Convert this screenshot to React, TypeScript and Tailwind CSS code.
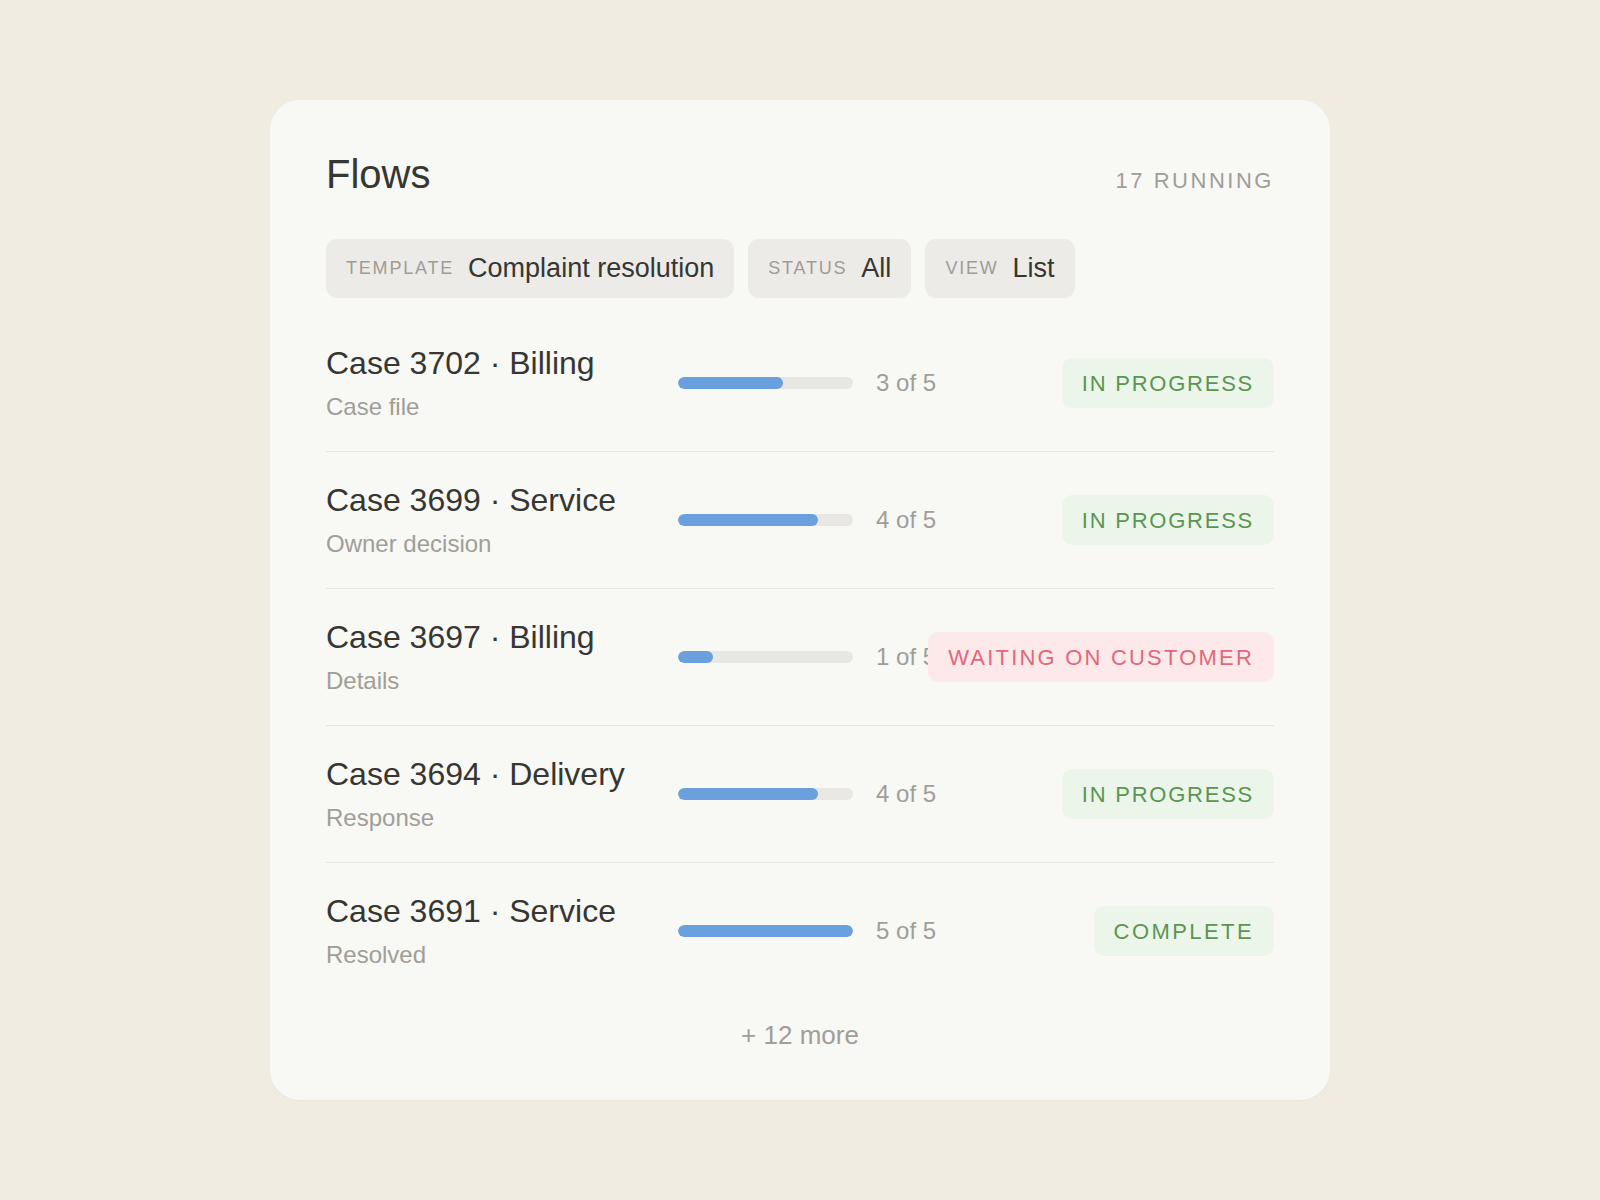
import React from 'react';

type Status = 'progress' | 'waiting' | 'complete';

const flows: { id: number; kind: string; step: string; done: number; status: Status }[] = [
  { id: 3702, kind: 'Billing', step: 'Case file', done: 3, status: 'progress' },
  { id: 3699, kind: 'Service', step: 'Owner decision', done: 4, status: 'progress' },
  { id: 3697, kind: 'Billing', step: 'Details', done: 1, status: 'waiting' },
  { id: 3694, kind: 'Delivery', step: 'Response', done: 4, status: 'progress' },
  { id: 3691, kind: 'Service', step: 'Resolved', done: 5, status: 'complete' },
];

const statusStyle: Record<Status, { label: string; className: string }> = {
  progress: { label: 'IN PROGRESS', className: 'bg-[#ecf5e9] text-[#5a9652] tracking-[0.08em]' },
  waiting: { label: 'WAITING ON CUSTOMER', className: 'bg-[#fde9e9] text-[#e0687c] tracking-[0.1em]' },
  complete: { label: 'COMPLETE', className: 'bg-[#ecf5e9] text-[#5a9652] tracking-[0.11em]' },
};

function Chip({ label, value }: { label: string; value: string }) {
  return (
    <div className="h-[59px] px-5 flex items-center gap-3.5 rounded-[11px] bg-[#ecebe7]">
      <span className="text-[18px] tracking-[0.1em] text-[#9f9c96]">{label}</span>
      <span className="text-[27px] text-[#363633]">{value}</span>
    </div>
  );
}

export default function App() {
  return (
    <div
      className="min-h-screen bg-[#f1ece1] flex items-center justify-center"
      style={{ fontFamily: '"Liberation Sans", Arial, sans-serif' }}
    >
      <div className="w-[1060px] bg-[#f8f8f4] rounded-[30px] px-14 pt-[50px] pb-[49px] shadow-[0_1px_2px_rgba(0,0,0,0.03)]">
        {/* Header */}
        <div className="flex items-baseline justify-between">
          <h1 className="text-[40px] leading-[48px] text-[#363633]">Flows</h1>
          <span className="text-[22px] tracking-[0.115em] text-[#a19e97]">17 RUNNING</span>
        </div>

        {/* Filters */}
        <div className="mt-[41px] flex gap-3.5">
          <Chip label="TEMPLATE" value="Complaint resolution" />
          <Chip label="STATUS" value="All" />
          <Chip label="VIEW" value="List" />
        </div>

        {/* Rows */}
        <div className="mt-[17px]">
          {flows.map((f, i) => {
            const s = statusStyle[f.status];
            return (
              <div
                key={f.id}
                className={`flex items-center py-7 ${i < flows.length - 1 ? 'border-b border-[#e6e5e0]' : ''}`}
              >
                <div className="w-[352px] shrink-0 flex flex-col gap-2">
                  <span className="text-[32px] leading-[40px] text-[#363633]">
                    Case {f.id} · {f.kind}
                  </span>
                  <span className="text-[24px] leading-[32px] text-[#a19e98]">{f.step}</span>
                </div>
                <div className="w-[175px] h-[12px] shrink-0 rounded-full bg-[#e8e7e3] overflow-hidden">
                  <div className="h-full rounded-full bg-[#6aa0dd]" style={{ width: `${(f.done / 5) * 100}%` }} />
                </div>
                <span className="ml-[23px] shrink-0 whitespace-nowrap text-[24px] leading-[32px] text-[#a19e98]">
                  {f.done} of 5
                </span>
                <div className="flex-1 min-w-0 flex justify-end">
                  <span
                    className={`shrink-0 whitespace-nowrap h-[50px] px-5 flex items-center rounded-[10px] text-[22px] ${s.className}`}
                  >
                    {s.label}
                  </span>
                </div>
              </div>
            );
          })}
        </div>

        <div className="pt-5 text-center text-[26px] leading-[32px] text-[#a19e98]">+ 12 more</div>
      </div>
    </div>
  );
}
